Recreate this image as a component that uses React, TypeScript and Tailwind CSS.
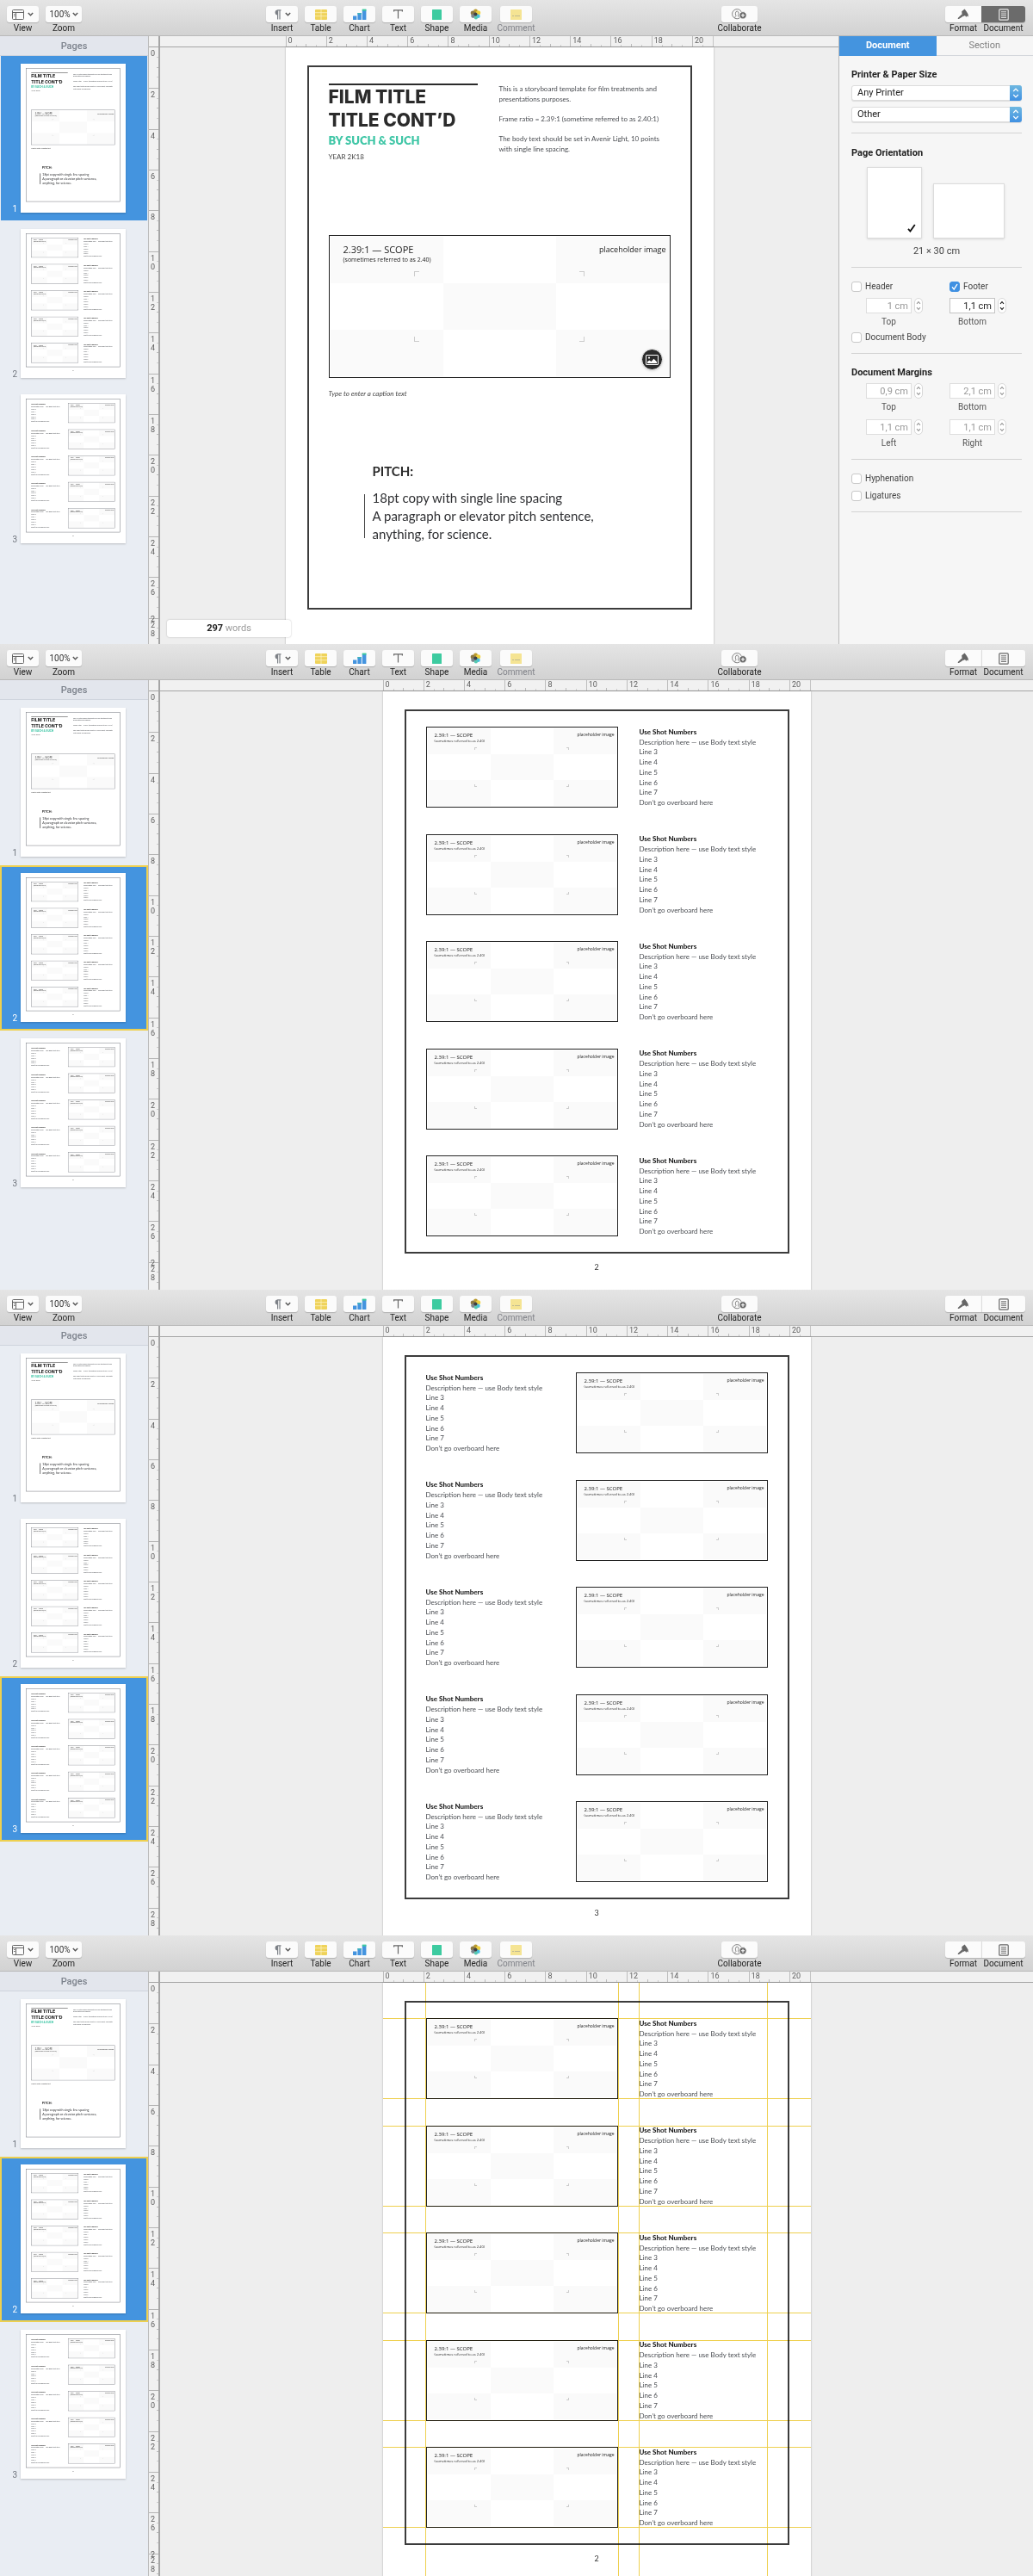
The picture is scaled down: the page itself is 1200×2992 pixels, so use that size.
import React, { useId } from 'react';

type PageKind = 1 | 2 | 3;

/* ---------- Icons ---------- */

const Chevron = () => (
  <svg width="7" height="5" viewBox="0 0 7 5" fill="none" stroke="#555" strokeWidth="1.4">
    <path d="M0.8 0.9 L3.5 3.8 L6.2 0.9" />
  </svg>
);

const ViewIcon = () => (
  <svg width="14" height="12" viewBox="0 0 14 12" fill="none" stroke="#666" strokeWidth="1">
    <rect x="0.5" y="0.5" width="13" height="11" rx="1" />
    <path d="M0.5 3.5H13.5M4.5 3.5V11.5M2 5.5H3.5M2 7.5H3.5" />
  </svg>
);

const PilcrowIcon = () => (
  <svg width="10" height="12" viewBox="0 0 10 12" fill="none">
    <path d="M5.5 0.5 A2.9 3 0 0 0 5.5 6.5 Z" fill="#7d8187" />
    <path d="M5.5 0.8H9.5M5.6 0.5V11.5M8 0.5V11.5" stroke="#7d8187" strokeWidth="1.2" />
  </svg>
);

const TableIcon = () => (
  <svg width="14" height="12" viewBox="0 0 14 12" fill="#efd35a">
    <rect width="14" height="12" rx="1" />
    <path d="M7 0V12M0 3.7H14M0 7.7H14" stroke="#fff6cf" strokeWidth="0.7" />
  </svg>
);

const ChartIcon = () => (
  <svg width="16" height="13" viewBox="0 0 16 13" fill="#4494df">
    <rect x="0" y="8.5" width="4.4" height="4.5" />
    <rect x="5.4" y="5" width="4.4" height="8" />
    <rect x="10.8" y="1" width="4.6" height="12" rx="0.5" />
    <rect x="5.4" y="5" width="4.4" height="1.6" fill="#3fb6b8" />
    <rect x="10.8" y="0.6" width="4.6" height="2" fill="#3ccb9d" />
  </svg>
);

const TextIcon = () => (
  <svg width="11" height="11" viewBox="0 0 11 11" stroke="#666" strokeWidth="1.2" fill="none">
    <path d="M0.6 2.4V0.8H10.4V2.4M5.5 0.8V10.6" />
  </svg>
);

const ShapeIcon = () => (
  <svg width="11" height="12" viewBox="0 0 11 12">
    <rect width="11" height="12" rx="0.5" fill="#3dcba0" />
  </svg>
);

const MediaIcon = () => (
  <svg width="13" height="13" viewBox="0 0 13 13">
    <circle cx="6.5" cy="3" r="2.4" fill="#b99a2e" />
    <circle cx="9.6" cy="4.8" r="2.6" fill="#efd13f" />
    <circle cx="3.2" cy="5" r="2.5" fill="#8c7a45" />
    <circle cx="3.6" cy="8.6" r="2.4" fill="#7d858c" />
    <circle cx="9.4" cy="8.8" r="2.3" fill="#46bfe0" />
    <circle cx="6.9" cy="10.4" r="2.1" fill="#56c9b0" />
    <circle cx="6.4" cy="6.6" r="2.1" fill="#3d4045" />
  </svg>
);

const CommentIcon = () => (
  <svg width="13" height="12" viewBox="0 0 13 12">
    <rect width="13" height="12" rx="0.5" fill="#f5e493" />
    <path d="M2 7.5H4M5 7.5H11" stroke="#b9b493" strokeWidth="0.9" />
  </svg>
);

const CollabIcon = () => (
  <svg width="18" height="13" viewBox="0 0 18 13" fill="none" stroke="#777" strokeWidth="0.9">
    <circle cx="6.2" cy="6.2" r="5.6" />
    <path d="M3.6 10.8C3.6 9.4 5 9.2 5 8.2C4 7.2 4 3 6.2 3S8.4 7.2 7.4 8.2C7.4 9 8.4 9.4 8.6 10.2" />
    <circle cx="13" cy="7.8" r="4.2" fill="#6b6b6b" stroke="#fafafa" />
    <path d="M13 5.7V9.9M10.9 7.8H15.1" stroke="#fff" strokeWidth="1.1" />
  </svg>
);

const BrushIcon = () => (
  <svg width="14" height="13" viewBox="0 0 14 13" fill="#666">
    <path d="M5.2 3.2L8.6 0.6L10.8 3.6L12.6 6.4L12.9 9.6L11 8.6L10.4 10L9 8L7 9L5.6 7Z" />
    <path d="M5.4 6.6L7 8.8L2.4 11.8C0.8 12.6 0.2 11.4 1.2 10.4Z" />
  </svg>
);

const DocIcon = ({ light }: { light?: boolean }) => (
  <svg width="12" height="14" viewBox="0 0 12 14" fill="none" stroke={light ? '#e8e8e8' : '#666'} strokeWidth="1.2">
    <rect x="0.8" y="0.8" width="10.4" height="12.4" rx="1" />
    <path d="M3 3.8H9M3 6H9M3 8.2H9M3 10.4H9" strokeWidth="1" />
  </svg>
);

/* ---------- Toolbar ---------- */

function Tool({ label, wide, muted, children }: { label: string; wide?: boolean; muted?: boolean; children: React.ReactNode }) {
  return (
    <button type="button" className={`flex flex-col items-center ${wide ? 'w-[42px]' : 'w-[37px]'}`}>
      <span className="flex h-[19px] w-full items-center justify-center gap-1 rounded-[3px] bg-[#fbfbfb] shadow-[0_1px_1px_rgba(0,0,0,0.18)]">
        {children}
      </span>
      <span className={`h-[14px] whitespace-nowrap text-[10px] leading-[14px] ${muted ? 'text-[#808288]' : 'text-[#222]'}`}>{label}</span>
    </button>
  );
}

function Toolbar({ docActive }: { docActive?: boolean }) {
  return (
    <header className="flex h-[42px] shrink-0 items-start border-b border-[#b9b9b9] bg-linear-to-b from-[#e5e5e5] to-[#d2d2d2] pt-[7px] pr-[9px] pl-2">
      <div className="flex gap-2">
        <Tool label="View"><ViewIcon /><Chevron /></Tool>
        <Tool label="Zoom" wide>
          <span className="-mr-0.5 text-[10px] text-[#333]">100%</span>
          <Chevron />
        </Tool>
      </div>
      <div className="grow-[215]" />
      <div className="flex gap-2">
        <Tool label="Insert"><PilcrowIcon /><Chevron /></Tool>
        <Tool label="Table"><TableIcon /></Tool>
        <Tool label="Chart"><ChartIcon /></Tool>
        <Tool label="Text"><TextIcon /></Tool>
        <Tool label="Shape"><ShapeIcon /></Tool>
        <Tool label="Media"><MediaIcon /></Tool>
        <div className="pl-0.5"><Tool label="Comment" muted><CommentIcon /></Tool></div>
      </div>
      <div className="grow-[221]" />
      <Tool label="Collaborate" wide><CollabIcon /></Tool>
      <div className="grow-[219]" />
      <div className="flex">
        <button type="button" className="flex w-[42px] flex-col items-center">
          <span className="flex h-[19px] w-full items-center justify-center rounded-l-[3px] bg-[#fbfbfb] shadow-[0_1px_1px_rgba(0,0,0,0.18)]"><BrushIcon /></span>
          <span className="h-[14px] text-[10px] leading-[14px] text-[#222]">Format</span>
        </button>
        <button type="button" className="flex w-[51px] flex-col items-center">
          <span className={`flex h-[19px] w-full items-center justify-center rounded-r-[3px] border-l shadow-[0_1px_1px_rgba(0,0,0,0.18)] ${docActive ? 'border-[#6b6b6b] bg-[#6b6b6b]' : 'border-[#ddd] bg-[#fbfbfb]'}`}>
            <DocIcon light={docActive} />
          </span>
          <span className="h-[14px] text-[10px] leading-[14px] text-[#222]">Document</span>
        </button>
      </div>
    </header>
  );
}

/* ---------- Storyboard page ---------- */

function Scope({ large, thumb }: { large?: boolean; thumb?: boolean }) {
  return (
    <div className={`relative overflow-hidden bg-white ${large ? 'h-[166px] w-full' : 'h-[94px] w-[223px] shrink-0'} ${thumb ? 'border-2 border-[#8a8d93]' : 'border border-[#222]'}`}>
      <div className="grid h-full grid-cols-3 grid-rows-3 p-px">
        {[0, 1, 2, 3, 4, 5, 6, 7, 8].map((i) => (
          <div key={i} className={i % 2 === 0 ? 'bg-[#fafafa]' : 'bg-white'} />
        ))}
      </div>
      <div className="absolute inset-1/4">
        <i className={`absolute top-0 left-0 border-t border-l border-[#ccc] ${large ? 'size-[6px]' : 'size-[3px]'}`} />
        <i className={`absolute top-0 right-0 border-t border-r border-[#ccc] ${large ? 'size-[6px]' : 'size-[3px]'}`} />
        <i className={`absolute bottom-0 left-0 border-b border-l border-[#ccc] ${large ? 'size-[6px]' : 'size-[3px]'}`} />
        <i className={`absolute right-0 bottom-0 border-r border-b border-[#ccc] ${large ? 'size-[6px]' : 'size-[3px]'}`} />
      </div>
      <div className={`absolute inset-x-0 top-0 flex justify-between font-['Open_Sans'] text-[#222] ${large ? 'pt-[9px] pr-1 pl-4' : 'pt-[5px] pr-[3px] pl-[9px]'}`}>
        <div>
          <p className={large ? 'text-[11px] leading-[14px]' : 'text-[6px] leading-[8px]'}>2.39:1 — SCOPE</p>
          <p className={large ? 'text-[7px] leading-[10px]' : 'text-[4px] leading-[5px]'}>(sometimes referred to as 2.40)</p>
        </div>
        <p className={large ? 'text-[9px] leading-[14px]' : 'text-[5px] leading-[7px]'}>placeholder image</p>
      </div>
      {large && !thumb && (
        <button type="button" aria-label="Replace image" className="absolute right-2 bottom-2 flex size-[25px] items-center justify-center rounded-full border border-[#eee] bg-[#2c2c2c] shadow">
          <svg width="15" height="12" viewBox="0 0 15 12" fill="none" stroke="#fff">
            <rect x="0.5" y="0.5" width="14" height="11" rx="0.5" />
            <path d="M2 10V8L4.5 6.5L6.5 8L9.5 4.8L13 8.2V10Z" fill="#fff" stroke="none" />
            <circle cx="4" cy="3.6" r="1.1" fill="#fff" stroke="none" />
          </svg>
        </button>
      )}
    </div>
  );
}

function CoverPage({ thumb }: { thumb?: boolean }) {
  return (
    <>
      <div className="flex justify-between">
        <div className="w-[173px] border-t-2 border-[#2b2b2b]">
          <h1 className="whitespace-nowrap font-['Inter'] text-[21px] leading-[27px] font-extrabold text-[#2b2b2b]">FILM TITLE<br />TITLE CONT’D</h1>
          <p className="text-[13px] leading-[20px] font-extrabold text-[#3fc6a6]">BY SUCH &amp; SUCH</p>
          <p className="mt-[3px] text-[8px] leading-[12px] text-[#444]">YEAR 2K18</p>
        </div>
        <div className="flex w-[199px] flex-col gap-[11px] text-[8px] leading-[12px] text-[#4a4d52]">
          <p>This is a storyboard template for film treatments and presentations purposes.</p>
          <p>Frame ratio = 2.39:1 (sometime referred to as 2.40:1)</p>
          <p>The body text should be set in Avenir Light, 10 points with single line spacing.</p>
        </div>
      </div>
      <div className="mt-[85px]"><Scope large thumb={thumb} /></div>
      <p className="mt-3 text-[8px] leading-[12px] text-[#444] italic">Type to enter a caption text</p>
      <h2 className="mt-[74px] ml-[51px] text-[15px] leading-[20px] font-bold text-[#2b2b2b]">PITCH:</h2>
      <div className="mt-[11px] ml-[41px] flex gap-[9px]">
        <div className={`my-[6px] bg-[#444] ${thumb ? 'w-[3px]' : 'w-px'}`} />
        <p className="text-[15px] leading-[21px] text-[#2f3033]">18pt copy with single line spacing<br />A paragraph or elevator pitch sentence,<br />anything, for science.</p>
      </div>
    </>
  );
}

const shotLines = ['Description here — use Body text style', 'Line 3', 'Line 4', 'Line 5', 'Line 6', 'Line 7', 'Don’t go overboard here'];

function Shot({ flip, thumb }: { flip?: boolean; thumb?: boolean }) {
  return (
    <div className={`flex justify-between ${flip ? 'flex-row-reverse' : ''}`}>
      <Scope thumb={thumb} />
      <div className="grid h-[94px] w-[149px] auto-rows-fr items-center whitespace-nowrap text-[8px] text-[#4a4d52]">
        <h3 className="font-black text-[#1f1f1f]">Use Shot Numbers</h3>
        {shotLines.map((l) => <p key={l}>{l}</p>)}
      </div>
    </div>
  );
}

function Page({ kind, thumb }: { kind: PageKind; thumb?: boolean }) {
  return (
    <article className="flex h-[705px] w-[497px] flex-col bg-white px-[25px] pt-[21px] font-['Lato']">
      <div className={`flex h-[632px] flex-col border-2 px-[23px] ${thumb ? 'border-[#70747c]' : 'border-[#3c3c3c]'} ${kind === 1 ? 'pt-[19px]' : 'justify-between py-[18px]'}`}>
        {kind === 1 ? <CoverPage thumb={thumb} /> : [0, 1, 2, 3, 4].map((i) => <Shot key={i} flip={kind === 3} thumb={thumb} />)}
      </div>
      {kind !== 1 && <p className="mt-[10px] text-center text-[9px] leading-[12px] text-[#333]">{kind}</p>}
    </article>
  );
}

/* ---------- Sidebar and rulers ---------- */

function Sidebar({ selected, outlined }: { selected: PageKind; outlined?: boolean }) {
  const kinds: PageKind[] = [1, 2, 3];
  return (
    <nav aria-label="Pages" className="w-[172px] shrink-0 overflow-hidden bg-[#e9edf3]">
      <h2 className="h-[23px] border-b border-[#cfd4dd] bg-[#e3e6ed] text-center text-[11px] leading-[23px] font-medium text-[#7c828c]">Pages</h2>
      {kinds.map((k) => {
        const on = k === selected;
        const state = on ? (outlined ? 'border-2 border-[#eed04f] bg-[#4494df] px-0 pt-[7px]' : 'border-x border-b border-[#e9edf3] bg-[#4494df] px-px pt-[9px]') : 'px-[2px] pt-[9px]';
        return (
          <button key={k} type="button" className={`flex h-[192px] w-full items-start ${state}`}>
            <span className={`mt-[163px] w-[18px] text-right text-[10px] leading-[12px] ${on ? 'text-white' : 'text-[#70757d]'}`}>{k}</span>
            <span aria-hidden="true" className="ml-1 block h-[173px] w-[122px] overflow-hidden bg-white text-left shadow-[0_1px_2px_rgba(0,0,0,0.2)]">
              <span className="block w-[497px] origin-top-left scale-[0.2455]"><Page kind={k} thumb /></span>
            </span>
          </button>
        );
      })}
    </nav>
  );
}

function VerticalRuler({ glitch }: { glitch?: boolean }) {
  return (
    <div className="w-[14px] shrink-0 overflow-hidden border-r-2 border-l border-r-[#a5a5a5] border-l-[#bdbdbd] bg-[#f1f1f1]">
      <div className="h-[13px] border-b border-[#a5a5a5]" />
      <div className="grid h-[710px] auto-rows-fr">
        {Array.from({ length: 15 }, (_, i) => (
          <div key={i} className={`relative flex justify-between ${i ? 'border-t border-[#b5b5b5]' : ''}`}>
            <div className="flex flex-col pt-[2px] pl-[2px] text-[9px] leading-[10px] text-[#606060]">
              {String(i * 2).split('').map((d, n) => <span key={n}>{d}</span>)}
            </div>
            {glitch && i === 14 && <span className="absolute top-[-5px] left-[2px] text-[9px] leading-[10px] text-[#606060]">2</span>}
            <div className="grid w-[2px] grid-rows-4">
              <i className="border-b border-[#ccc]" /><i className="border-b border-[#bbb]" /><i className="border-b border-[#ccc]" /><i />
            </div>
          </div>
        ))}
      </div>
    </div>
  );
}

function HorizontalRuler() {
  return (
    <div className="flex h-[13px] shrink-0 justify-center border-b border-[#a5a5a5] bg-[#f1f1f1]">
      <div className="grid w-[497px] grid-cols-21 border-r border-[#c5c5c5]">
        {Array.from({ length: 21 }, (_, i) => (
          <div key={i} className={`relative flex items-end ${i % 2 === 0 ? 'border-l border-[#bdbdbd]' : ''}`}>
            {i % 2 === 1 && <i className="h-[3px] w-px bg-[#bbb]" />}
            <i className="ml-[11px] h-[2px] w-px bg-[#ccc]" />
            {i % 2 === 0 && <span className="absolute top-0 left-[2px] text-[9px] leading-[11px] text-[#606060]">{i}</span>}
          </div>
        ))}
      </div>
    </div>
  );
}

/* ---------- Alignment guides ---------- */

function Guides() {
  return (
    <div className="pointer-events-none absolute inset-0 mix-blend-multiply">
      <div className="absolute inset-y-0 left-[49px] w-[398px]">
        <i className="absolute inset-y-0 left-0 w-px bg-[#eed04f]" />
        <i className="absolute inset-y-0 left-[224px] w-px bg-[#eed04f]" />
        <i className="absolute inset-y-0 left-[248px] w-px bg-[#eed04f]" />
        <i className="absolute inset-y-0 right-0 w-px bg-[#eed04f]" />
      </div>
      <div className="absolute inset-x-0 top-[41px] flex h-[592px] flex-col justify-between">
        {[0, 1, 2, 3, 4].map((i) => <div key={i} className="h-[94px] border-y border-[#eed04f]" />)}
      </div>
    </div>
  );
}

/* ---------- Inspector ---------- */

function Select({ label, value }: { label: string; value: string }) {
  return (
    <div className="relative h-[18px]">
      <select aria-label={label} defaultValue={value} className="block h-full w-full appearance-none rounded-[3px] border border-[#dcdcdc] bg-white pl-[6px] text-[11px] leading-[16px] text-[#222] shadow-[0_1px_1px_rgba(0,0,0,0.1)]">
        <option>{value}</option>
      </select>
      <span className="pointer-events-none absolute inset-y-0 right-0 flex w-[14px] items-center justify-center rounded-r-[3px] bg-linear-to-b from-[#6fb8e0] to-[#3f90e2]">
        <svg width="8" height="12" viewBox="0 0 8 12" fill="none" stroke="#fff" strokeWidth="1.2"><path d="M1.2 4L4 1.2L6.8 4M1.2 8L4 10.8L6.8 8" /></svg>
      </span>
    </div>
  );
}

function Check({ label, checked }: { label: string; checked?: boolean }) {
  return (
    <label className="flex h-3 items-center gap-1 text-[10px] leading-[12px] text-[#444]">
      <span className="relative size-3">
        <input type="checkbox" defaultChecked={checked} className="block size-3 appearance-none rounded-[3px] border border-[#c8c8c8] bg-white checked:border-[#3f90e2] checked:bg-[#3f90e2]" />
        {checked && (
          <svg className="pointer-events-none absolute inset-0" width="12" height="12" viewBox="0 0 12 12" fill="none" stroke="#fff" strokeWidth="1.4"><path d="M3 6.4L5.2 9L9 3" /></svg>
        )}
      </span>
      {label}
    </label>
  );
}

function Measure({ label, value, active }: { label: string; value: string; active?: boolean }) {
  const id = useId();
  return (
    <div className="w-[66px]">
      <div className="flex justify-between">
        <input id={id} defaultValue={value} className={`h-[18px] w-[53px] border bg-white pr-[3px] text-right text-[11px] ${active ? 'border-[#c4c4c4] text-[#222]' : 'border-[#dedede] text-[#999]'}`} />
        <button type="button" aria-label={`Adjust ${label}`} className={`flex h-[18px] w-[10px] items-center justify-center rounded-[5px] border border-[#d8d8d8] bg-white ${active ? 'text-[#222]' : 'text-[#999]'}`}>
          <svg width="6" height="12" viewBox="0 0 6 12" fill="none" stroke="currentColor" strokeWidth="1.1"><path d="M1 3.8L3 1.6L5 3.8M1 8.2L3 10.4L5 8.2" /></svg>
        </button>
      </div>
      <label htmlFor={id} className="mt-1 block w-[53px] text-center text-[10px] leading-[12px] text-[#555]">{label}</label>
    </div>
  );
}

function Inspector() {
  return (
    <aside className="w-[226px] shrink-0 border-l border-[#b9b9b9] bg-[#f6f6f6]">
      <div role="tablist" className="flex h-[23px] border-b border-[#d3d6db] text-[11px]">
        <button type="button" role="tab" aria-selected="true" className="h-[23px] flex-1 bg-[#4494df] font-bold text-white">Document</button>
        <button type="button" role="tab" aria-selected="false" className="h-[22px] flex-1 text-[#808080]">Section</button>
      </div>
      <div className="pr-[13px] pl-[14px] text-[#222]">
        <h3 className="pt-[15px] text-[11px] leading-[14px] font-bold">Printer &amp; Paper Size</h3>
        <div className="mt-[5px] flex flex-col gap-[7px]">
          <Select label="Printer" value="Any Printer" />
          <Select label="Paper size" value="Other" />
        </div>
        <hr className="mt-3 border-[#d3d3d3]" />
        <h3 className="mt-4 text-[11px] leading-[14px] font-bold">Page Orientation</h3>
        <div className="mt-[9px] flex items-end gap-[13px] pl-[18px]">
          <button type="button" aria-label="Portrait" className="flex h-[83px] w-[64px] items-end justify-end border border-[#dcdcdc] bg-white p-[6px] shadow-sm">
            <svg width="10" height="10" viewBox="0 0 10 10" fill="none" stroke="#111" strokeWidth="1.8"><path d="M1 5.8L3.4 8.6L8.8 1" /></svg>
          </button>
          <button type="button" aria-label="Landscape" className="h-[64px] w-[83px] border border-[#dcdcdc] bg-white shadow-sm" />
        </div>
        <p className="mt-2 text-center text-[11px] leading-[14px] text-[#444]">21 × 30 cm</p>
        <hr className="mt-[11px] border-[#d3d3d3]" />
        <div className="mt-4 grid grid-cols-[114px_1fr]">
          <Check label="Header" />
          <Check label="Footer" checked />
        </div>
        <div className="mt-[7px] flex gap-[31px] pl-[17px]">
          <Measure label="Top" value="1 cm" />
          <Measure label="Bottom" value="1,1 cm" active />
        </div>
        <div className="mt-[6px]"><Check label="Document Body" /></div>
        <hr className="mt-3 border-[#d3d3d3]" />
        <h3 className="mt-[15px] text-[11px] leading-[14px] font-bold">Document Margins</h3>
        <div className="mt-[5px] flex flex-wrap gap-x-[31px] gap-y-[8px] pl-[17px]">
          <Measure label="Top" value="0,9 cm" />
          <Measure label="Bottom" value="2,1 cm" />
          <Measure label="Left" value="1,1 cm" />
          <Measure label="Right" value="1,1 cm" />
        </div>
        <hr className="mt-3 border-[#d3d3d3]" />
        <div className="mt-4 flex flex-col gap-2">
          <Check label="Hyphenation" />
          <Check label="Ligatures" />
        </div>
        <hr className="mt-3 border-[#d3d3d3]" />
      </div>
    </aside>
  );
}

/* ---------- Window ---------- */

function Window({ kind, height, inspector, guides, glitch }: { kind: PageKind; height: string; inspector?: boolean; guides?: boolean; glitch?: boolean }) {
  return (
    <section className={`flex flex-col overflow-hidden ${height}`}>
      <Toolbar docActive={inspector} />
      <div className="flex min-h-0 flex-1">
        <Sidebar selected={kind} outlined={!inspector} />
        <VerticalRuler glitch={glitch} />
        <main className="relative flex min-w-0 flex-1 flex-col overflow-hidden bg-[#eee]">
          <HorizontalRuler />
          <div className="flex min-h-0 flex-1 justify-center">
            <div className="relative h-[705px] shadow-[0_0_2px_rgba(0,0,0,0.3)]">
              <Page kind={kind} />
              {guides && <Guides />}
            </div>
          </div>
          {inspector && (
            <p className="absolute bottom-2 left-2 h-[20px] w-[144px] rounded-[3px] bg-white text-center text-[11px] leading-[20px] text-[#999] shadow-[0_0_2px_rgba(0,0,0,0.25)]">
              <b className="text-[#222]">297</b> words
            </p>
          )}
        </main>
        {inspector && <Inspector />}
      </div>
    </section>
  );
}

export default function App() {
  return (
    <div className="w-full overflow-hidden bg-[#eee] font-['Roboto']">
      <Window kind={1} height="h-[748px]" inspector glitch />
      <Window kind={2} height="h-[750px]" glitch />
      <Window kind={3} height="h-[750px]" />
      <Window kind={2} height="h-[744px]" guides glitch />
    </div>
  );
}
